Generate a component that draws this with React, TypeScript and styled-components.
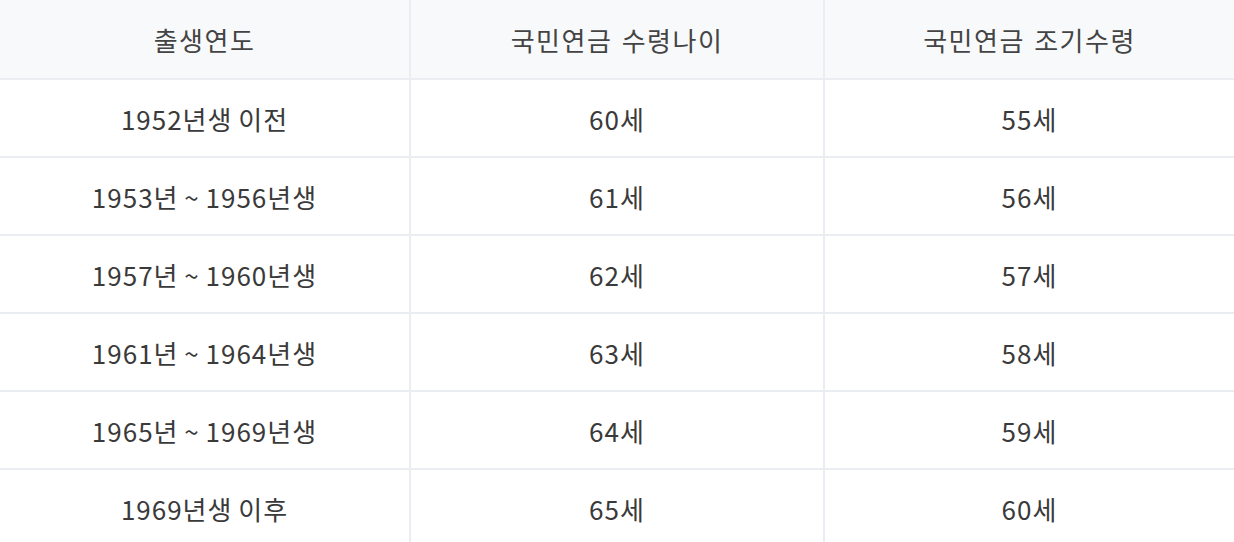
import React from "react";
import styled, { createGlobalStyle } from "styled-components";

const GlobalStyle = createGlobalStyle`
  html, body {
    margin: 0;
    padding: 0;
    background: #ffffff;
  }
  body {
    font-family: "Noto Sans CJK KR", "Noto Sans", sans-serif;
  }
`;

const Table = styled.div`
  display: grid;
  grid-template-columns: 409px 412px 409px;
  grid-template-rows: 78px repeat(6, 76px);
  gap: 2px;
  width: 1234px;
  background: #eaedf1;
`;

const Cell = styled.div<{ $head?: boolean }>`
  display: flex;
  align-items: center;
  justify-content: center;
  background: ${(p) => (p.$head ? "#f8f9fb" : "#ffffff")};
  color: ${(p) => (p.$head ? "#444444" : "#3a3a3a")};
  font-size: 26px;
  font-weight: 400;
  letter-spacing: ${(p) => (p.$head ? "1.5px" : "1px")};
  word-spacing: ${(p) => (p.$head ? "2px" : "-1px")};
  white-space: pre;
`;

const headers = ["출생연도", "국민연금 수령나이", "국민연금 조기수령"];

const rows: [string, string, string][] = [
  ["1952년생 이전", "60세", "55세"],
  ["1953년 ~ 1956년생", "61세", "56세"],
  ["1957년 ~ 1960년생", "62세", "57세"],
  ["1961년 ~ 1964년생", "63세", "58세"],
  ["1965년 ~ 1969년생", "64세", "59세"],
  ["1969년생 이후", "65세", "60세"],
];

export default function App() {
  return (
    <>
      <GlobalStyle />
      <Table>
        {headers.map((h) => (
          <Cell key={h} $head>
            {h}
          </Cell>
        ))}
        {rows.map((r, i) =>
          r.map((c, j) => <Cell key={`${i}-${j}`}>{c}</Cell>)
        )}
      </Table>
    </>
  );
}
